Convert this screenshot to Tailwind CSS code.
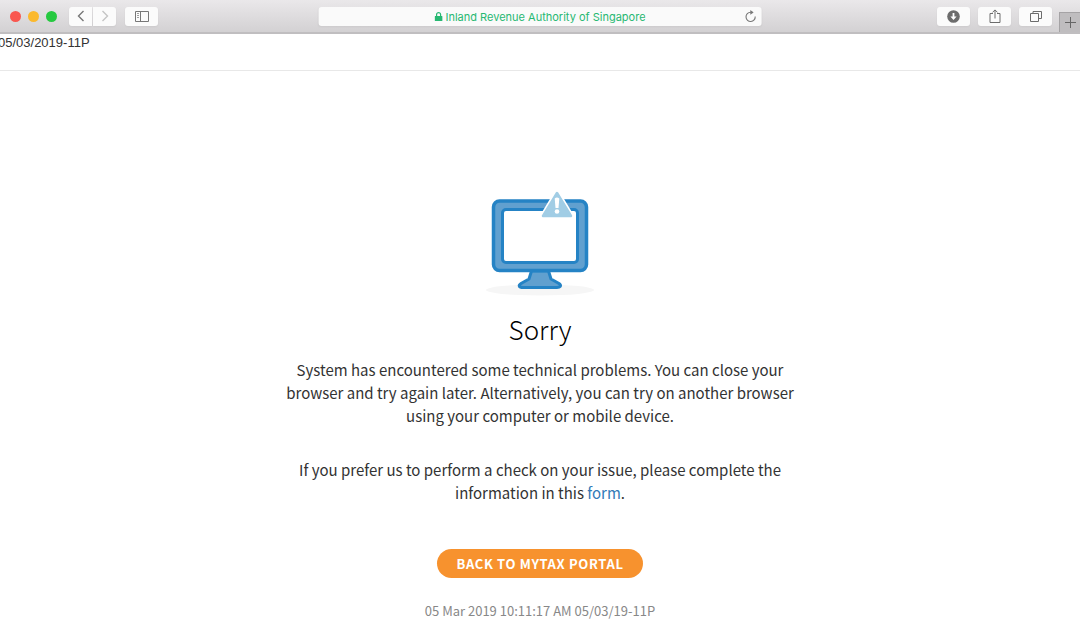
<!DOCTYPE html>
<html lang="en">
<head>
    <meta charset="UTF-8">
    <meta name="viewport" content="width=device-width, initial-scale=1.0">
    <title>Inland Revenue Authority of Singapore</title>
    <script src="https://cdn.jsdelivr.net/npm/@tailwindcss/browser@4"></script>
</head>
<body class="bg-white min-h-screen flex flex-col overflow-x-hidden font-['Noto_Sans_CJK_SC','Noto_Sans',sans-serif] text-[#333]">

    <!-- Browser toolbar -->
    <header class="relative h-[34px] shrink-0 flex items-center justify-between pl-[10px] pr-[27px] bg-linear-to-b from-[#eae8ea] to-[#d3d1d3] border-b-2 border-[#c0bec0]">
        <div class="flex items-center">
            <div class="flex gap-[7px] mr-[12px]">
                <span class="size-[11px] rounded-full bg-[#f9574f]"></span>
                <span class="size-[11px] rounded-full bg-[#fbb92e]"></span>
                <span class="size-[11px] rounded-full bg-[#26c940]"></span>
            </div>
            <div class="flex gap-px mr-[9px]">
                <button aria-label="Back" class="w-[23px] h-[19px] rounded-l-[3px] bg-[#fbfbfb] shadow-xs flex items-center justify-center text-[#777]">
                    <svg class="w-[8px] h-[12px]" viewBox="0 0 8 12" fill="none" stroke="currentColor" stroke-width="1.4"><path d="M6.5 1 1.5 6l5 5"/></svg>
                </button>
                <button aria-label="Forward" class="w-[23px] h-[19px] rounded-r-[3px] bg-[#fbfbfb] shadow-xs flex items-center justify-center text-[#c4c4c4]">
                    <svg class="w-[8px] h-[12px]" viewBox="0 0 8 12" fill="none" stroke="currentColor" stroke-width="1.4"><path d="m1.5 1 5 5-5 5"/></svg>
                </button>
            </div>
            <button aria-label="Show sidebar" class="w-[33px] h-[19px] rounded-[3px] bg-[#fbfbfb] shadow-xs flex items-center justify-center text-[#777]">
                <svg class="w-[14px] h-[11px]" viewBox="0 0 14 11" fill="none" stroke="currentColor"><path d="M.5.5h13v10H.5zM5.5.5v10"/><path d="M2 2.5h2M2 4.5h2M2 6.5h2" stroke-width=".7"/></svg>
            </button>
        </div>

        <!-- Address bar -->
        <div class="absolute left-1/2 -translate-x-1/2 top-[7px] w-[41%] h-[19px] rounded-[3px] bg-[#fafafa] shadow-xs flex items-center justify-center text-[#27b872]">
            <label for="address" aria-label="Address" class="mr-[3px]">
                <svg class="w-[8px] h-[9px]" viewBox="0 0 8 9"><path fill="currentColor" d="M.5 4h7a.5.5 0 0 1 .5.5v4a.5.5 0 0 1-.5.5h-7a.5.5 0 0 1-.5-.5v-4A.5.5 0 0 1 .5 4z"/><path fill="none" stroke="currentColor" stroke-width="1.2" d="M2 4.5V2.600a2 2 0 0 1 4 0v1.900"/></svg>
            </label>
            <input id="address" type="text" value="Inland Revenue Authority of Singapore" class="field-sizing-content pt-px font-['Inter',sans-serif] text-[11px] outline-none">
            <button aria-label="Reload" class="absolute right-[5px] text-[#777]">
                <svg class="w-[12px] h-[13px]" viewBox="0 0 12 13" fill="none" stroke="currentColor" stroke-width="1.1"><path d="M10.6 6.5A4.6 4.6 0 1 1 6 2.300h2"/><path d="M5.7 0 9 2.400 5.700 4.700z" fill="currentColor" stroke="none"/></svg>
            </button>
        </div>

        <div class="flex gap-[8px] mr-px text-[#6c6c6c]">
            <button aria-label="Downloads" class="w-[33px] h-[19px] rounded-[3px] bg-[#fbfbfb] shadow-xs flex items-center justify-center">
                <svg class="size-[13px]" viewBox="0 0 13 13"><circle cx="6.5" cy="6.5" r="6.3" fill="currentColor"/><path fill="#fff" d="M5.6 3h1.800v3.500h2.200L6.500 9.900 3.400 6.500h2.200z"/></svg>
            </button>
            <button aria-label="Share" class="w-[33px] h-[19px] rounded-[3px] bg-[#fbfbfb] shadow-xs flex items-center justify-center">
                <svg class="w-[12px] h-[14px]" viewBox="0 0 12 14" fill="none" stroke="currentColor"><path d="M4 4.500H1v9h10v-9H8M6 9.500V1M3.500 3.400 6 .9l2.500 2.500"/></svg>
            </button>
            <button aria-label="Show tabs" class="w-[33px] h-[19px] rounded-[3px] bg-[#fbfbfb] shadow-xs flex items-center justify-center">
                <svg class="w-[12px] h-[11px]" viewBox="0 0 12 11" fill="none" stroke="currentColor"><path d="M.5 2.500h8v8H.5z"/><path d="M3 2.500V.5h8.500v7H8.500"/></svg>
            </button>
        </div>
        <button aria-label="New tab" class="absolute right-0 top-[12px] w-[21px] h-[20px] bg-[#bfbdbf] border-l border-t border-[#a5a3a5] flex items-center justify-center text-[#666]">
            <svg class="size-[11px]" viewBox="0 0 11 11" stroke="currentColor"><path d="M5.5 0v11M0 5.500h11"/></svg>
        </button>
    </header>

    <!-- Error code strip -->
    <div class="h-[37px] shrink-0 border-b border-[#e8e8e8]">
        <p class="-ml-[2px] pt-px font-['Liberation_Sans',sans-serif] text-[13px] leading-4">05/03/2019-11P</p>
    </div>

    <!-- Message -->
    <main class="w-full max-w-[520px] mx-auto pt-[118px] flex flex-col items-center text-center">
        <svg class="w-[110px] h-[108px]" viewBox="0 0 110 108" role="img" aria-label="Computer with a warning sign">
            <ellipse cx="55" cy="101" rx="54" ry="5.5" fill="#f6f6f6"/>
            <path d="M46.500 82h17l2.500 8 8 4.500c3 2.500 1 4-2 4H38c-4 0-5-2-2-4l8-4.500z" fill="#61a0cf" stroke="#2583c5" stroke-width="3" stroke-linejoin="round"/>
            <rect x="8.500" y="12" width="93" height="69.500" rx="6" fill="#61a0cf" stroke="#2583c5" stroke-width="3.500"/>
            <rect x="17.500" y="20.500" width="75" height="53" rx="3.500" fill="#fff" stroke="#2583c5" stroke-width="3"/>
            <path d="M72 3 87 28H57z" fill="#a1cde5" stroke="#fff" stroke-width="5" stroke-linejoin="round"/>
            <path d="M72 4 86 27H58z" fill="#a1cde5" stroke="#a1cde5" stroke-width="2.500" stroke-linejoin="round"/>
            <path d="M69.700 9.500q2.300-2 4.600 0l-.8 9.500h-3z" fill="#fff"/>
            <circle cx="72" cy="22.500" r="2.300" fill="#fff"/>
        </svg>
        <h1 class="mt-[12px] text-[26px] leading-10 font-light text-black">Sorry</h1>
        <p class="mt-[9px] text-[15px] leading-[23px]">System has encountered some technical problems. You can close your browser and try again later. Alternatively, you can try on another browser using your computer or mobile device.</p>
        <p class="mt-[31px] px-4 text-[15px] leading-[23px]">If you prefer us to perform a check on your issue, please complete the information in this <a href="#" class="text-[#337ab7]">form</a>.</p>
        <button class="mt-[45px] h-[29px] px-[19px] rounded-full bg-[#f7922e] text-white text-[13px] leading-5 font-bold tracking-wider">BACK TO MYTAX PORTAL</button>
        <p class="mt-[23px] text-[13px] leading-5 text-[#888]">05 Mar 2019 10:11:17 AM 05/03/19-11P</p>
    </main>

</body>
</html>
